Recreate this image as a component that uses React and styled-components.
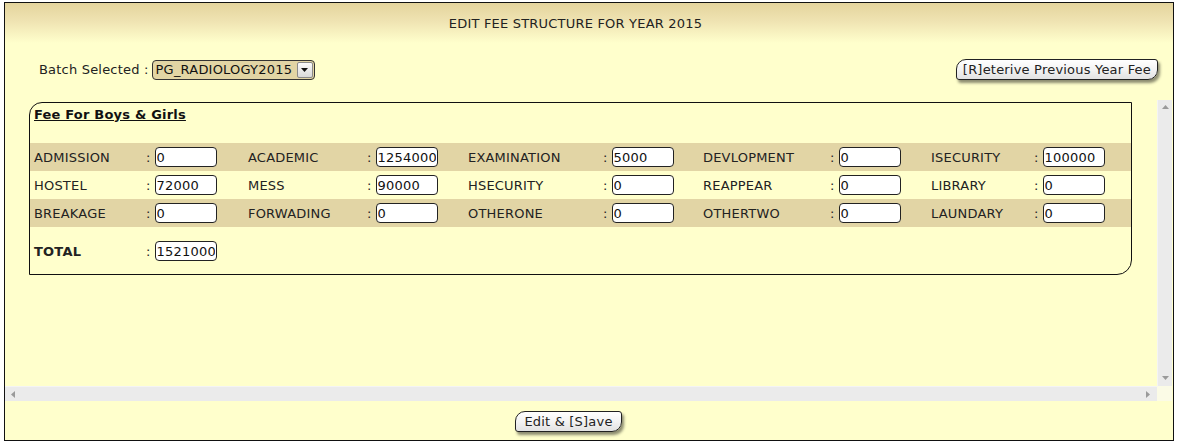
import React from "react";
import styled, { createGlobalStyle } from "styled-components";

const GlobalStyle = createGlobalStyle`
  html, body {
    margin: 0;
    padding: 0;
    background: #ffffff;
  }
  body {
    font-family: Verdana, "DejaVu Sans", sans-serif;
    font-size: 13px;
    letter-spacing: 0.2px;
    color: #222;
  }
`;

const Frame = styled.div`
  box-sizing: border-box;
  width: 1170px;
  height: 439px;
  margin: 2px 0 0 4px;
  border: 1px solid #111;
  background: #ffffcc;
  display: flex;
  flex-direction: column;
`;

const TitleBar = styled.div`
  height: 40px;
  padding: 13px 27px 0 0;
  box-sizing: border-box;
  line-height: 16px;
  text-align: center;
  font-size: 13px;
  color: #222;
  background: linear-gradient(to bottom, #e4d49d 0%, #efe3b2 45%, #ffffcc 100%);
`;

const Toolbar = styled.div`
  height: 57px;
  box-sizing: border-box;
  padding: 16px 15px 0 34px;
  display: flex;
  justify-content: space-between;
  align-items: flex-start;
`;

const BatchGroup = styled.div`
  display: flex;
  align-items: center;
  gap: 3px;
  margin-top: 1px;
  line-height: 16px;
`;

const SelectBox = styled.div`
  box-sizing: border-box;
  width: 163px;
  height: 20px;
  border: 1px solid #333;
  border-radius: 4px;
  background: #e2d5a4;
  display: flex;
  align-items: center;
  justify-content: space-between;
  padding: 0 1px 0 3px;
  font-size: 13px;
  color: #111;
`;

const ArrowBox = styled.span`
  box-sizing: border-box;
  width: 16px;
  height: 16px;
  border: 1px solid #8a8a8a;
  border-radius: 2px;
  background: linear-gradient(to bottom, #fbfbfb, #d9d9d9);
  display: flex;
  align-items: center;
  justify-content: center;
`;

const ActionButton = styled.button`
  font-family: Verdana, "DejaVu Sans", sans-serif;
  font-size: 13px;
  letter-spacing: 0.2px;
  color: #222;
  height: 21px;
  padding: 0 ${(p) => p.$padX || 5}px;
  line-height: 19px;
  border: 1px solid #222;
  border-radius: 10px 3px 10px 3px;
  background: linear-gradient(to bottom, #ffffff 0%, #f3f3f3 50%, #e2e2e2 100%);
  box-shadow: 2px 3px 3px rgba(0, 0, 0, 0.45);
  cursor: pointer;
  white-space: nowrap;
`;

const ScrollArea = styled.div`
  height: 301px;
  padding-right: 1px;
  display: grid;
  grid-template-columns: 1fr 15px;
  grid-template-rows: 1fr 15px;
`;

const Viewport = styled.div`
  overflow: hidden;
`;

const ScrollTrack = styled.div`
  background: #ebebeb;
  display: flex;
  flex-direction: ${(p) => (p.$vertical ? "column" : "row")};
  justify-content: space-between;
  align-items: center;
  padding: ${(p) => (p.$vertical ? "5px 0 6px" : "0 7px 0 6px")};
  border-${(p) => (p.$vertical ? "left" : "top")}: 1px solid #f4f4f4;
`;

const ScrollCorner = styled.div`
  background: #fbfbe6;
`;

const FeeSection = styled.div`
  box-sizing: border-box;
  width: 1103px;
  margin: 2px 0 0 24px;
  border: 1px solid #111;
  border-top-left-radius: 13px;
  border-bottom-right-radius: 15px;
  padding: 4px 0 9px 0;
`;

const Legend = styled.div`
  padding-left: 4px;
  font-weight: bold;
  text-decoration: underline;
  line-height: 16px;
  margin-bottom: 20px;
  color: #111;
`;

const FeeRow = styled.div`
  display: grid;
  grid-template-columns: 112px 102px 119px 101px 135px 100px 127px 101px 103px 1fr;
  align-items: center;
  height: 28px;
  padding-left: 4px;
  background: ${(p) => (p.$shaded ? "#e2d5a5" : "transparent")};
  margin-top: ${(p) => (p.$gap ? "10px" : "0")};
`;

const Label = styled.span`
  font-weight: ${(p) => (p.$bold ? "bold" : "normal")};
  color: #222;
  white-space: nowrap;
`;

const ValueCell = styled.span`
  display: flex;
  align-items: center;
  gap: 4px;
`;

const AmountInput = styled.input`
  box-sizing: border-box;
  width: 62px;
  height: 20px;
  border: 1px solid #222;
  border-radius: 4px;
  padding: 0 1px;
  background: #fff;
  font-family: Verdana, "DejaVu Sans", sans-serif;
  font-size: 13px;
  letter-spacing: 0.2px;
  color: #111;
  outline: none;
`;

const Footer = styled.div`
  flex: 1;
  display: flex;
  justify-content: center;
  align-items: flex-start;
  padding: 10px 41px 0 0;
`;

const fees = [
  [
    ["ADMISSION", "0"],
    ["ACADEMIC", "1254000"],
    ["EXAMINATION", "5000"],
    ["DEVLOPMENT", "0"],
    ["ISECURITY", "100000"],
  ],
  [
    ["HOSTEL", "72000"],
    ["MESS", "90000"],
    ["HSECURITY", "0"],
    ["REAPPEAR", "0"],
    ["LIBRARY", "0"],
  ],
  [
    ["BREAKAGE", "0"],
    ["FORWADING", "0"],
    ["OTHERONE", "0"],
    ["OTHERTWO", "0"],
    ["LAUNDARY", "0"],
  ],
];

const Arrow = ({ dir }) => {
  const paths = {
    up: "M0 4 H7 L3.5 0 Z",
    down: "M0 0 H7 L3.5 4 Z",
    left: "M4 0 V7 L0 3.5 Z",
    right: "M0 0 V7 L4 3.5 Z",
  };
  const vertical = dir === "up" || dir === "down";
  return (
    <svg
      width={vertical ? 7 : 4}
      height={vertical ? 4 : 7}
      viewBox={vertical ? "0 0 7 4" : "0 0 4 7"}
    >
      <path d={paths[dir]} fill="#9a9a9a" />
    </svg>
  );
};

export default function App() {
  return (
    <>
      <GlobalStyle />
      <Frame>
        <TitleBar>EDIT FEE STRUCTURE FOR YEAR 2015</TitleBar>
        <Toolbar>
          <BatchGroup>
            <span>Batch Selected :</span>
            <SelectBox>
              <span>PG_RADIOLOGY2015</span>
              <ArrowBox>
                <svg width="7" height="4" viewBox="0 0 7 4">
                  <path d="M0 0 H7 L3.5 4 Z" fill="#111" />
                </svg>
              </ArrowBox>
            </SelectBox>
          </BatchGroup>
          <ActionButton $padX={6}>[R]eterive Previous Year Fee</ActionButton>
        </Toolbar>
        <ScrollArea>
          <Viewport>
            <FeeSection>
              <Legend>Fee For Boys &amp; Girls</Legend>
              {fees.map((row, i) => (
                <FeeRow key={i} $shaded={i % 2 === 0}>
                  {row.map(([name, val]) => (
                    <React.Fragment key={name}>
                      <Label>{name}</Label>
                      <ValueCell>
                        :<AmountInput defaultValue={val} />
                      </ValueCell>
                    </React.Fragment>
                  ))}
                </FeeRow>
              ))}
              <FeeRow $gap>
                <Label $bold>TOTAL</Label>
                <ValueCell>
                  :<AmountInput defaultValue="1521000" />
                </ValueCell>
              </FeeRow>
            </FeeSection>
          </Viewport>
          <ScrollTrack $vertical>
            <Arrow dir="up" />
            <Arrow dir="down" />
          </ScrollTrack>
          <ScrollTrack>
            <Arrow dir="left" />
            <Arrow dir="right" />
          </ScrollTrack>
          <ScrollCorner />
        </ScrollArea>
        <Footer>
          <ActionButton $padX={8}>Edit &amp; [S]ave</ActionButton>
        </Footer>
      </Frame>
    </>
  );
}
